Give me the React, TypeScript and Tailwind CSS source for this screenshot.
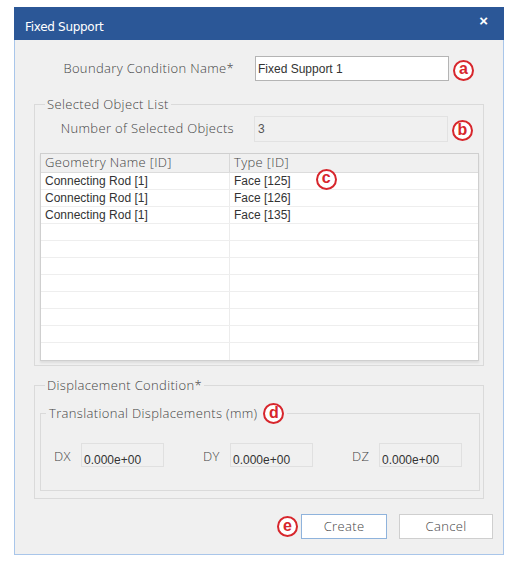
import React from "react";

const label = "text-[13px] font-light tracking-[0.35px] text-[#444] [font-family:'Open_Sans',sans-serif]";
const data = "text-[12px] text-[#333] [font-family:'Liberation_Sans',Arial,sans-serif]";

function Mark({ ch }: { ch: string }) {
  return (
    <span className="inline-flex items-center justify-center w-[21px] h-[21px] rounded-full border-2 border-[#d7262c] text-[#d7262c] font-bold text-[16px] leading-none pb-[2px] tracking-normal [font-family:'Liberation_Sans',Arial,sans-serif] bg-white">
      {ch}
    </span>
  );
}

const rows = [
  ["Connecting Rod [1]", "Face [125]"],
  ["Connecting Rod [1]", "Face [126]"],
  ["Connecting Rod [1]", "Face [135]"],
  ["", ""],
  ["", ""],
  ["", ""],
  ["", ""],
  ["", ""],
  ["", ""],
  ["", ""],
  ["", ""],
];

export default function App() {
  return (
    <div className="w-[512px] h-[566px] bg-white pt-[7px] pl-[14px]">
      <div className="w-[490px] h-[548px] flex flex-col border border-t-0 border-[#a9c6ea] bg-[#f0f0f0]">
        {/* Title bar */}
        <div className="h-[33px] bg-[#2b5797] flex justify-between pl-[11px] pr-[16px] -mx-px">
          <span className="pt-[13px] text-[12px] leading-[14px] text-white [font-family:'DejaVu_Sans',sans-serif] tracking-[-0.3px]">
            Fixed Support
          </span>
          <span className="pt-[6px] text-[15px] leading-[16px] font-bold text-white [font-family:'Liberation_Sans',Arial,sans-serif]">
            ×
          </span>
        </div>

        {/* Row 1 */}
        <div className="flex items-center h-[25px] mt-[16px]">
          <span className={`${label} w-[219px] text-right`}>Boundary Condition Name*</span>
          <div className="ml-[21px] w-[194px] h-[25px] bg-white border border-[#b4b4b4] flex items-center pl-[2px]">
            <span className={data}>Fixed Support 1</span>
          </div>
          <span className="ml-[4px]">
            <Mark ch="a" />
          </span>
        </div>

        {/* Selected Object List */}
        <fieldset className="mt-[14px] ml-[19px] w-[450px] border border-[#dadada] pl-[5px] pr-[4px] pb-[4px] min-w-0">
          <legend className={`${label} ml-[5px] px-[2px] leading-[18px]`}>Selected Object List</legend>
          <div className="flex items-center h-[26px] mt-[3px]">
            <span className={`${label} w-[194px] text-right`}>Number of Selected Objects</span>
            <div className="ml-[20px] w-[194px] h-[26px] border border-[#e2e2e2] bg-[#f0f0f0] flex items-start pt-[3px] pl-[3px]">
              <span className={`${data} text-[#555]`}>3</span>
            </div>
            <span className="ml-[4px]">
              <Mark ch="b" />
            </span>
          </div>

          <div className="mt-[11px] border border-[#cfcfcf] shadow-[0_2px_2px_rgba(0,0,0,0.08)] bg-white">
            <div className="flex h-[19px] bg-[#f0f0f0] border-b border-[#dcdcdc] items-center">
              <div className={`${label} w-[189px] pl-[4px] border-r border-[#d8d8d8] h-full flex items-center text-[12.5px]`}>
                Geometry Name [ID]
              </div>
              <div className={`${label} flex-1 pl-[4px] flex items-center text-[12.5px]`}>
                Type [ID]
              </div>
            </div>
            {rows.map((r, i) => (
              <div key={i} className="flex h-[17px] border-b border-[#eeeeee] last:border-b-0">
                <div className={`${data} w-[189px] pl-[4px] border-r border-[#ececec] leading-[17px]`}>{r[0]}</div>
                <div className={`${data} flex-1 pl-[4px] leading-[17px] flex items-center`}>
                  <span>{r[1]}</span>
                  {i === 0 && (
                    <span className="ml-[25px] -mt-[4px]">
                      <Mark ch="c" />
                    </span>
                  )}
                </div>
              </div>
            ))}
          </div>
        </fieldset>

        {/* Displacement Condition */}
        <fieldset className="mt-[10px] ml-[19px] w-[450px] border border-[#dadada] pl-[5px] pr-[3px] pb-[7px] min-w-0">
          <legend className={`${label} ml-[5px] px-[2px] leading-[18px]`}>Displacement Condition*</legend>
          <fieldset className="mt-[9px] border border-[#dadada] pb-[23px] min-w-0">
            <legend className={`${label} ml-[5px] px-[3px] flex items-center gap-[6px]`}>
              <span>Translational Displacements (mm)</span>
              <Mark ch="d" />
            </legend>
            <div className="flex pl-[13px] mt-[19px]">
              {[
                ["DX", "0.000e+00"],
                ["DY", "0.000e+00"],
                ["DZ", "0.000e+00"],
              ].map(([l, v], i) => (
                <div key={l} className={`${i < 2 ? "w-[149px]" : ""} shrink-0 flex items-center`}>
                  <span className={`${label} w-[27px] pt-[3px]`}>{l}</span>
                  <div className="w-[83px] h-[24px] border border-[#e0e0e0] bg-[#f0f0f0] pl-[2px] pt-[2px]">
                    <span className={data}>{v}</span>
                  </div>
                </div>
              ))}
            </div>
          </fieldset>
        </fieldset>

        {/* Buttons */}
        <div className="flex items-center mt-[15px] pl-[262px]">
          <Mark ch="e" />
          <button className={`${label} ml-[3px] w-[86px] h-[25px] bg-white border border-[#8fb3dc]`}>
            Create
          </button>
          <button className={`${label} ml-[12px] w-[94px] h-[25px] bg-white border border-[#cfcfcf]`}>
            Cancel
          </button>
        </div>
      </div>
    </div>
  );
}
